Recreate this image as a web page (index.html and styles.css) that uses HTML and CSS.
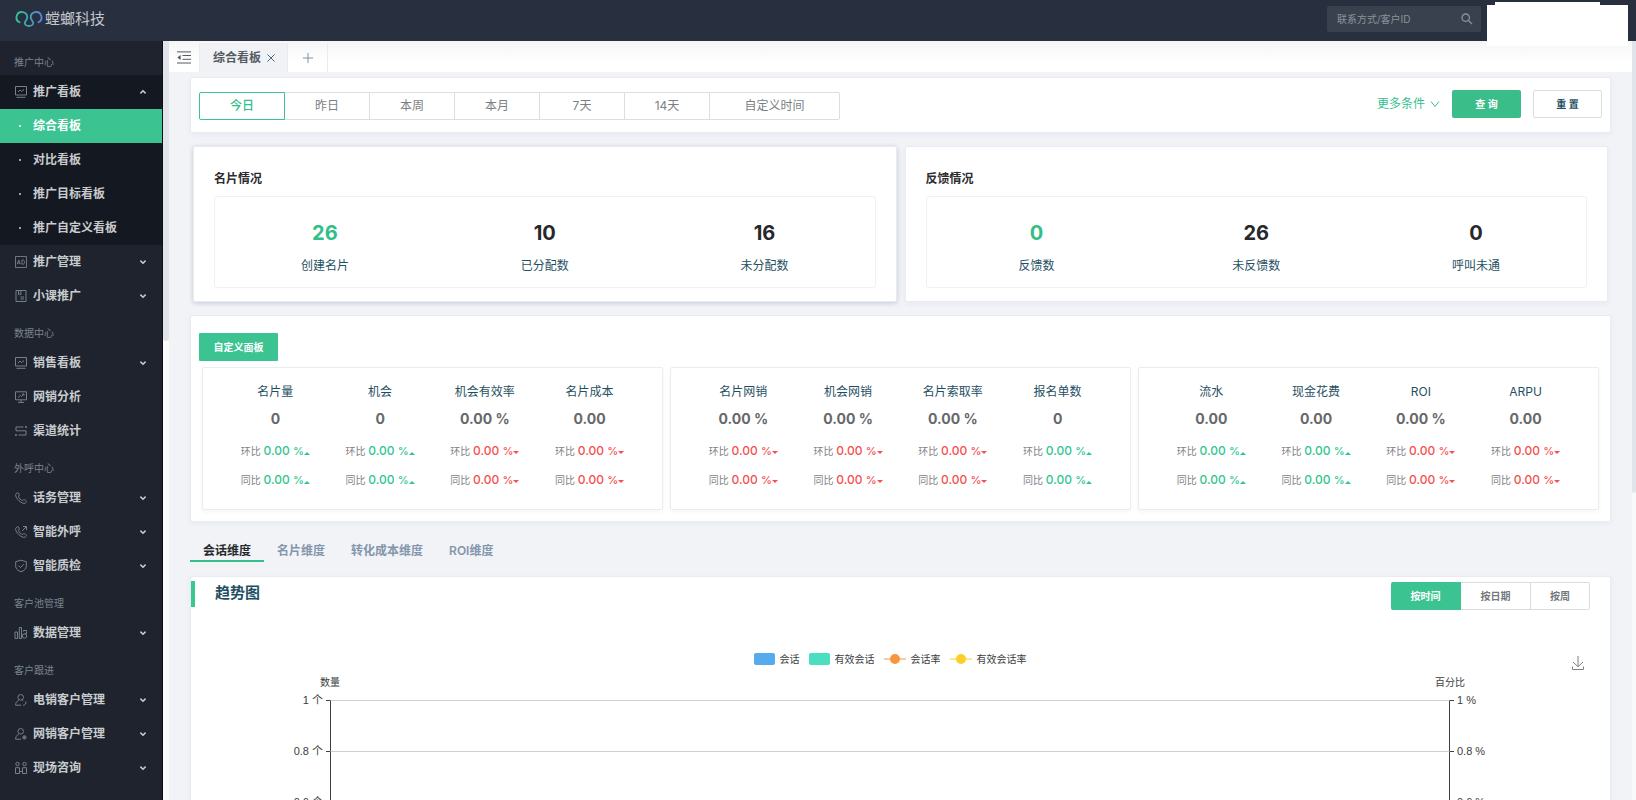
FILE: index.html
```html
<!DOCTYPE html>
<html lang="zh-CN">
<head>
<meta charset="utf-8">
<title>综合看板</title>
<link rel="stylesheet" href="styles.css">
</head>
<body>
<svg class="defs" aria-hidden="true">
  <defs>
    <symbol id="down" viewBox="0 0 8 8"><path d="M1.4 2.6 4 5.2 6.6 2.6" stroke-width="1.5"/></symbol>
    <symbol id="up" viewBox="0 0 8 8"><path d="M1.4 5.4 4 2.8 6.6 5.4" stroke-width="1.5"/></symbol>
    <symbol id="board" viewBox="0 0 14 14"><path d="M1.5 1.5h11v8.5h-11zM2.5 12.3h9M4 7l2-2 1.6 1.5L10 4.5"/></symbol>
    <symbol id="ad" viewBox="0 0 14 14"><path d="M1.5 1.5h11v11h-11zM3.2 9.2 4.8 5l1.6 4.2M3.7 8h2.2M8 5v4.2h.8c2.4 0 2.4-4.2 0-4.2z" stroke-width=".9"/></symbol>
    <symbol id="book" viewBox="0 0 14 14"><path d="M2 1.5h10v11H2zM4.5 1.5v4.2l1.2-.8 1.2.8V1.5M6.5 8h3.5M6.5 10h3.5"/></symbol>
    <symbol id="monitor" viewBox="0 0 14 14"><path d="M1.5 1.8h11v8h-11zM7 9.8v2.5M4 12.4h6M4.2 7.5 6.4 5.4l1 1L10 4M8.3 4H10v1.6"/></symbol>
    <symbol id="route" viewBox="0 0 14 14"><path d="M9.5 3H2v3.8h10V11H4.5M1.4 11h1.2M11.2 3h1.4"/><circle cx="12" cy="3" r=".6"/><circle cx="2" cy="11" r=".6"/></symbol>
    <symbol id="phone" viewBox="0 0 14 14"><path d="M1.800 3.200C3.200 1.200 4.200 1.100 5 3c.8 1.800-.9 1.800-.4 3 .6 1.300 1.700 2.500 3 3.200 1.200.7 1.600-1 3-.4 2.300 1 2.500 1.800.6 3.300C8.300 14 .3 6.500 1.800 3.200z"/></symbol>
    <symbol id="phoneout" viewBox="0 0 14 14"><path d="M1.800 3.200C3.200 1.200 4.200 1.100 5 3c.8 1.800-.9 1.800-.4 3 .6 1.300 1.700 2.500 3 3.200 1.200.7 1.600-1 3-.4 2.300 1 2.500 1.800.6 3.300C8.300 14 .3 6.500 1.800 3.200zM8 6l4.500-4.500M9 1.500h3.500V5"/></symbol>
    <symbol id="shield" viewBox="0 0 14 14"><path d="M7 1.200 12.300 2.700v4.500c0 2.700-2.300 4.500-5.300 5.600-3-1.100-5.300-2.900-5.300-5.600V2.700zM4.500 6.600l2 2 3.200-3.400"/></symbol>
    <symbol id="bars" viewBox="0 0 14 14"><path d="M1 6h2.500v6.500H1zM5.300 1.500h2.200v11H5.300zM9.500 5.500v-1h3v1"/><circle cx="10.500" cy="10" r="2.200"/><path d="M10.500 7.800h2V5.500"/></symbol>
    <symbol id="user1" viewBox="0 0 14 14"><circle cx="6.700" cy="4.300" r="2.800"/><path d="M4.700 7.300C2.500 8.500 1.600 10 1.600 12.200H7M9 12.300c2.300-.2 3-1.600 3-3.800M8.300 7.200l1 .6"/></symbol>
    <symbol id="user2" viewBox="0 0 14 14"><circle cx="6.700" cy="4.300" r="2.800"/><path d="M4.700 7.300C2.500 8.500 1.600 10 1.600 12.200H7"/><circle cx="10.400" cy="10.400" r="1.700"/><path d="M10.400 9.200v2.400M9.200 10.400h2.400"/></symbol>
    <symbol id="meet" viewBox="0 0 14 14"><circle cx="3.500" cy="3" r="1.700"/><circle cx="10.500" cy="3" r="1.700"/><path d="M1.500 6.700h4v5.800h-4zM8.500 6.700h4v5.800h-4zM5.500 10.500h3"/></symbol>
  </defs>
</svg>

<header class="top">
  <a class="logo" href="#">
    <svg class="logo-mark" viewBox="0 0 28 18" aria-hidden="true">
      <defs><linearGradient id="lg" x1="0" x2="1"><stop offset="0" stop-color="#35c490"/><stop offset=".55" stop-color="#3fa3ba"/><stop offset="1" stop-color="#5f7fdc"/></linearGradient></defs>
      <path d="M4.500 12.300A5.400 5.400 0 1 1 12.300 7.500C12.200 9.800 9.800 11 9.800 13c0 1.700 1.900 3 4.200 3s4.200-1.300 4.200-3c0-2-2.400-3.200-2.500-5.500a5.400 5.400 0 1 1 7.800 4.800" fill="none" stroke="url(#lg)" stroke-width="1.800" stroke-linecap="round"/>
    </svg>
    <span>螳螂科技</span>
  </a>
  <label class="search">
    <input type="text" placeholder="联系方式/客户ID" aria-label="联系方式/客户ID">
    <svg viewBox="0 0 12 12" aria-hidden="true"><circle cx="4.700" cy="4.700" r="3.700"/><path d="M7.500 7.500 11 11"/></svg>
  </label>
  <div class="account"></div>
</header>

<div class="shell">
  <nav class="side">
    <h2>推广中心</h2>
    <a class="item open" href="#"><svg class="ico"><use href="#board"/></svg><span>推广看板</span><svg class="arr"><use href="#up"/></svg></a>
    <a class="item open active" href="#"><i class="dot"></i><span>综合看板</span></a>
    <a class="item open" href="#"><i class="dot"></i><span>对比看板</span></a>
    <a class="item open" href="#"><i class="dot"></i><span>推广目标看板</span></a>
    <a class="item open" href="#"><i class="dot"></i><span>推广自定义看板</span></a>
    <a class="item" href="#"><svg class="ico"><use href="#ad"/></svg><span>推广管理</span><svg class="arr"><use href="#down"/></svg></a>
    <a class="item" href="#"><svg class="ico"><use href="#book"/></svg><span>小课推广</span><svg class="arr"><use href="#down"/></svg></a>
    <h2>数据中心</h2>
    <a class="item" href="#"><svg class="ico"><use href="#board"/></svg><span>销售看板</span><svg class="arr"><use href="#down"/></svg></a>
    <a class="item" href="#"><svg class="ico"><use href="#monitor"/></svg><span>网销分析</span></a>
    <a class="item" href="#"><svg class="ico"><use href="#route"/></svg><span>渠道统计</span></a>
    <h2>外呼中心</h2>
    <a class="item" href="#"><svg class="ico"><use href="#phone"/></svg><span>话务管理</span><svg class="arr"><use href="#down"/></svg></a>
    <a class="item" href="#"><svg class="ico"><use href="#phoneout"/></svg><span>智能外呼</span><svg class="arr"><use href="#down"/></svg></a>
    <a class="item" href="#"><svg class="ico"><use href="#shield"/></svg><span>智能质检</span><svg class="arr"><use href="#down"/></svg></a>
    <h2>客户池管理</h2>
    <a class="item" href="#"><svg class="ico"><use href="#bars"/></svg><span>数据管理</span><svg class="arr"><use href="#down"/></svg></a>
    <h2>客户跟进</h2>
    <a class="item" href="#"><svg class="ico"><use href="#user1"/></svg><span>电销客户管理</span><svg class="arr"><use href="#down"/></svg></a>
    <a class="item" href="#"><svg class="ico"><use href="#user2"/></svg><span>网销客户管理</span><svg class="arr"><use href="#down"/></svg></a>
    <a class="item" href="#"><svg class="ico"><use href="#meet"/></svg><span>现场咨询</span><svg class="arr"><use href="#down"/></svg></a>
  </nav>
  <div class="track side-track"><div class="thumb"></div></div>

  <main class="main">
    <div class="tabbar">
      <button class="fold" aria-label="收起菜单"><svg viewBox="0 0 14 13"><path d="M0 .9h14M5.500 4.500H14M5.500 8.300H14M0 12h14"/><path d="M3.600 3.900v5L.3 6.400z" class="solid"/></svg></button>
      <div class="tab">综合看板<button aria-label="关闭"><svg viewBox="0 0 8 8"><path d="M.4.4l7.200 7.200M7.600.4.4 7.600"/></svg></button></div>
      <button class="plus" aria-label="新建"><svg viewBox="0 0 10 10"><path d="M5 0v10M0 5h10"/></svg></button>
    </div>

    <div class="content">
      <section class="card filter">
        <div class="range">
          <button class="on">今日</button><button>昨日</button><button>本周</button><button>本月</button><button>7天</button><button>14天</button><button class="wide">自定义时间</button>
        </div>
        <div class="actions">
          <a class="more" href="#">更多条件<svg viewBox="0 0 10 8"><path d="M1 1.500 5 6.500 9 1.500"/></svg></a>
          <button class="primary">查 询</button>
          <button class="plain">重 置</button>
        </div>
      </section>

      <div class="pair">
        <section class="card sum raised">
          <h3>名片情况</h3>
          <div class="stats">
            <div><b class="green">26</b><span>创建名片</span></div>
            <div><b>10</b><span>已分配数</span></div>
            <div><b>16</b><span>未分配数</span></div>
          </div>
        </section>
        <section class="card sum">
          <h3>反馈情况</h3>
          <div class="stats">
            <div><b class="green">0</b><span>反馈数</span></div>
            <div><b>26</b><span>未反馈数</span></div>
            <div><b>0</b><span>呼叫未通</span></div>
          </div>
        </section>
      </div>

      <section class="card board">
        <button class="custom">自定义面板</button>
        <div class="panels">
          <div class="panel">
            <div class="metric up"><h4>名片量</h4><b>0</b><p>环比 <em>0.00 <small>%</small></em></p><p>同比 <em>0.00 <small>%</small></em></p></div>
            <div class="metric up"><h4>机会</h4><b>0</b><p>环比 <em>0.00 <small>%</small></em></p><p>同比 <em>0.00 <small>%</small></em></p></div>
            <div class="metric dn"><h4>机会有效率</h4><b>0.00 %</b><p>环比 <em>0.00 <small>%</small></em></p><p>同比 <em>0.00 <small>%</small></em></p></div>
            <div class="metric dn"><h4>名片成本</h4><b>0.00</b><p>环比 <em>0.00 <small>%</small></em></p><p>同比 <em>0.00 <small>%</small></em></p></div>
          </div>
          <div class="panel">
            <div class="metric dn"><h4>名片网销</h4><b>0.00 %</b><p>环比 <em>0.00 <small>%</small></em></p><p>同比 <em>0.00 <small>%</small></em></p></div>
            <div class="metric dn"><h4>机会网销</h4><b>0.00 %</b><p>环比 <em>0.00 <small>%</small></em></p><p>同比 <em>0.00 <small>%</small></em></p></div>
            <div class="metric dn"><h4>名片索取率</h4><b>0.00 %</b><p>环比 <em>0.00 <small>%</small></em></p><p>同比 <em>0.00 <small>%</small></em></p></div>
            <div class="metric up"><h4>报名单数</h4><b>0</b><p>环比 <em>0.00 <small>%</small></em></p><p>同比 <em>0.00 <small>%</small></em></p></div>
          </div>
          <div class="panel">
            <div class="metric up"><h4>流水</h4><b>0.00</b><p>环比 <em>0.00 <small>%</small></em></p><p>同比 <em>0.00 <small>%</small></em></p></div>
            <div class="metric up"><h4>现金花费</h4><b>0.00</b><p>环比 <em>0.00 <small>%</small></em></p><p>同比 <em>0.00 <small>%</small></em></p></div>
            <div class="metric dn"><h4>ROI</h4><b>0.00 %</b><p>环比 <em>0.00 <small>%</small></em></p><p>同比 <em>0.00 <small>%</small></em></p></div>
            <div class="metric dn"><h4>ARPU</h4><b>0.00</b><p>环比 <em>0.00 <small>%</small></em></p><p>同比 <em>0.00 <small>%</small></em></p></div>
          </div>
        </div>
      </section>

      <div class="dims">
        <button class="on">会话维度</button><button>名片维度</button><button>转化成本维度</button><button>ROI维度</button>
      </div>

      <section class="card trend">
        <div class="trend-head">
          <h3>趋势图</h3>
          <div class="seg"><button class="on">按时间</button><button>按日期</button><button class="short">按周</button></div>
        </div>
        <div class="legend-row">
          <ul class="legend">
            <li><i class="swatch blue"></i>会话</li>
            <li><i class="swatch teal"></i>有效会话</li>
            <li><svg class="line orange" viewBox="0 0 22 10"><path d="M0 5h22"/><circle cx="11" cy="5" r="5"/></svg>会话率</li>
            <li><svg class="line yellow" viewBox="0 0 22 10"><path d="M0 5h22"/><circle cx="11" cy="5" r="5"/></svg>有效会话率</li>
          </ul>
          <button class="save" aria-label="下载"><svg viewBox="0 0 12 14"><path d="M6 0v10.500M1 6l5 4.700L11 6M.5 10.500v3h11v-3"/></svg></button>
        </div>
        <div class="units"><span>数量</span><span>百分比</span></div>
        <div class="chart">
          <div class="row"><span class="l">1 个</span><i></i><div></div><i></i><span>1 %</span></div>
          <div class="row"><span class="l">0.8 个</span><i></i><div></div><i></i><span>0.8 %</span></div>
          <div class="row"><span class="l">0.6 个</span><i></i><div></div><i></i><span>0.6 %</span></div>
        </div>
      </section>
    </div>
  </main>
  <div class="track main-track"><div class="thumb"></div></div>
</div>
</body>
</html>
```

FILE: styles.css
```css
* { box-sizing: border-box; }

body {
  margin: 0;
  height: 100vh;
  display: flex;
  flex-direction: column;
  overflow: hidden;
  background: #f1f3f7;
  color: #1f5062;
  font: 12px/16px Inter, "Noto Sans CJK SC", sans-serif;
}

button {
  margin: 0;
  padding: 0;
  border: 0;
  background: none;
  color: inherit;
  font: inherit;
  cursor: pointer;
}

a { color: inherit; text-decoration: none; }
h2, h3, h4, p, ul { margin: 0; padding: 0; }
svg { fill: none; stroke: currentColor; flex: none; }
.defs { position: absolute; width: 0; height: 0; }

/* Header */
.top {
  flex: none;
  display: flex;
  align-items: flex-start;
  height: 41px;
  padding: 0 8px 0 15px;
  background: #28303f;
}
.logo {
  display: flex;
  align-items: center;
  gap: 2px;
  height: 38px;
  color: #c4c8ce;
  font-size: 15px;
  font-weight: 400;
}
.logo-mark { width: 28px; height: 18px; }
.search {
  display: flex;
  align-items: center;
  width: 154px;
  height: 26px;
  margin: 6px 6px 0 auto;
  padding: 0 8px 0 10px;
  border-radius: 2px;
  background: #3a414e;
  color: #8b929b;
}
.search input {
  flex: 1;
  min-width: 0;
  padding: 0;
  border: 0;
  outline: 0;
  background: none;
  color: inherit;
  font: 10px/16px Inter, "Noto Sans CJK SC", sans-serif;
}
.search input::placeholder { color: #8b929b; opacity: 1; }
.search svg { width: 12px; height: 12px; stroke-width: 1.3; }
.account {
  position: relative;
  z-index: 2;
  width: 141px;
  height: 41px;
  margin-top: 5px;
  background: #fff;
}
.account::before {
  content: "";
  position: absolute;
  top: -3px;
  left: 8px;
  width: 105px;
  height: 3px;
  background: #fff;
}

/* Sidebar */
.shell { flex: 1; min-height: 0; display: flex; }
.side {
  flex: none;
  width: 163px;
  padding-top: 1px;
  overflow: hidden;
  background: #1e232d;
  border-right: 1px solid #0c0f15;
  color: #c9cccf;
}
.side h2 {
  height: 33px;
  padding: 12px 14px 0;
  color: #7c848d;
  font-size: 10px;
  line-height: 16px;
  font-weight: 400;
}
.item {
  display: flex;
  align-items: center;
  height: 34px;
  padding: 0 15px 0 14px;
  font-weight: 600;
}
.item.open { background: #141820; }
.item.active { background: #3bc492; color: #fff; }
.ico { width: 14px; height: 14px; margin-right: 5px; color: #76808a; }
.arr { width: 8px; height: 8px; margin-left: auto; }
.dot {
  width: 2px;
  height: 2px;
  margin: 0 12px 0 5px;
  border-radius: 1px;
  background: currentColor;
}
.track { flex: none; background: #f8f9fb; }
.thumb { background: #e1e5eb; border-radius: 0 0 3px 3px; }
.side-track { width: 6px; background: #fcfcfd; }
.side-track .thumb { height: 300px; }
.main-track { width: 4px; }
.main-track .thumb { height: 452px; }

/* Page tabs */
.main { flex: 1; min-width: 0; overflow: hidden; }
.tabbar {
  display: flex;
  height: 31px;
  padding-top: 2px;
  background: linear-gradient(#f6f6f7, #fff 70%);
  color: #555b63;
}
.tabbar > * {
  display: flex;
  align-items: center;
  justify-content: center;
  border-right: 1px solid #e9ebef;
}
.fold { width: 31px; }
.fold svg { width: 14px; height: 13px; }
.solid { fill: currentColor; stroke: none; }
.tab { gap: 6px; padding: 0 12px 0 13px; background: #f0f2f5; font-weight: 600; }
.tab button { display: flex; color: #47697d; }
.tab svg { width: 8px; height: 8px; }
.plus { width: 40px; color: #7c94a5; }
.plus svg { width: 10px; height: 10px; }

/* Cards */
.content { padding: 5px 21px 0; }
.card {
  background: #fff;
  border: 1px solid #e8ebef;
  border-radius: 2px;
  box-shadow: 0 2px 6px rgba(40, 60, 90, .05);
}
.filter {
  display: flex;
  justify-content: space-between;
  height: 56px;
  padding: 12px 8px 0;
}
.range { display: flex; height: 28px; margin-top: 2px; color: #7b7f84; }
.range button {
  width: 86px;
  margin-right: -1px;
  border: 1px solid #dcdee1;
}
.range button.on { position: relative; border-color: #3bc492; border-radius: 2px 0 0 2px; color: #2fbf8a; font-weight: 500; }
.range button.wide { width: 131px; margin: 0; border-radius: 0 2px 2px 0; }
.actions { display: flex; align-items: flex-start; }
.more { display: flex; align-items: center; gap: 5px; height: 28px; margin-right: 12px; color: #36bf8c; }
.more svg { width: 10px; height: 8px; }
.actions button { width: 69px; height: 28px; border-radius: 2px; font-size: 10px; font-weight: 600; }
.primary { margin-right: 12px; background: #3abd88; color: #fff; }
.actions .plain { border: 1px solid #dadde1; }

.pair { display: grid; grid-template-columns: 1fr 1fr; gap: 8px; padding: 13px 3px; }
.sum { padding: 24px 20px 13px; }
.raised { box-shadow: 0 1px 5px rgba(30, 50, 80, .22); }
.sum h3 { color: #2a2c2f; font-size: 12px; line-height: 16px; font-weight: 600; }
.stats {
  display: grid;
  grid-template-columns: repeat(3, 1fr);
  margin-top: 9px;
  padding: 24px 0 13px;
  border: 1px solid #f0f1f3;
  border-radius: 3px;
  text-align: center;
}
.stats b, .stats span { display: block; }
.stats b { margin-bottom: 13px; color: #26282b; font-size: 20px; line-height: 24px; }
.stats b.green { color: #32be88; }

.board { padding: 17px 11px 11px; }
.custom {
  display: block;
  width: 79px;
  height: 28px;
  margin: 0 0 6px -3px;
  border-radius: 1px;
  background: #3bc492;
  color: #fff;
  font-size: 10px;
  font-weight: 600;
}
.panels { display: grid; grid-template-columns: repeat(3, 1fr); gap: 7px; }
.panel {
  display: grid;
  grid-template-columns: repeat(4, 1fr);
  padding: 16px 20px 21px;
  border: 1px solid #eaecef;
  border-radius: 2px;
  box-shadow: 0 2px 4px rgba(40, 60, 90, .04);
}
.metric { text-align: center; }
.metric h4 { font-size: 12px; font-weight: 400; margin-bottom: 10px; }
.metric b { display: block; margin-bottom: 15px; color: #66686b; font-size: 14px; line-height: 18px; font-weight: 700; }
.metric p { color: #7f8286; font-size: 10px; line-height: 16px; }
.metric p + p { margin-top: 13px; }
.metric em { font-size: 12px; font-style: normal; font-weight: 500; }
.metric small { font-size: 11px; }
.metric em::after {
  content: "";
  display: inline-block;
  border: 3px solid transparent;
}
.up em { color: #31c690; }
.up em::after { border-top: 0; border-bottom-color: currentColor; }
.dn em { color: #f5504f; }
.dn em::after { border-bottom: 0; border-top-color: currentColor; vertical-align: 1px; }

/* Dimension tabs and trend chart */
.dims { display: flex; margin: 17px 0 14px; color: #8496ab; font-weight: 600; }
.dims button { padding: 4px 13px 1px; border-bottom: 2px solid transparent; }
.dims button.on { color: #27292c; border-color: #34c08b; }

.trend-head { display: flex; justify-content: space-between; padding: 4px 20px 0 0; }
.trend-head h3 {
  height: 26px;
  padding-left: 20px;
  border-left: 4px solid #3bc88f;
  font-size: 15px;
  line-height: 24px;
  font-weight: 600;
}
.seg { display: flex; height: 28px; margin-top: 1px; color: #75787c; font-size: 10px; font-weight: 600; }
.seg button { width: 70px; border: 1px solid #dadde0; border-left: 0; }
.seg button.short { width: 59px; border-radius: 0 2px 2px 0; }
.seg button.on { border-color: #3bc492; border-radius: 2px 0 0 2px; background: #3bc492; color: #fff; }

.legend-row {
  display: grid;
  grid-template-columns: 1fr auto 1fr;
  align-items: center;
  padding: 38px 26px 0 5px;
}
.legend {
  grid-column: 2;
  display: flex;
  gap: 9px;
  list-style: none;
  color: #3c3e41;
  font-size: 10px;
}
.legend li { display: flex; align-items: center; gap: 5px; }
.swatch { width: 21px; height: 12px; border-radius: 2px; }
.blue { background: #55abee; }
.teal { background: #4bdfc1; }
.line { width: 22px; height: 10px; }
.line path { stroke-width: 2; opacity: .5; }
.line circle { fill: currentColor; stroke: none; }
.orange { color: #f9953f; }
.yellow { color: #fbcf27; }
.save { justify-self: end; display: flex; padding-top: 8px; color: #808285; }
.save svg { width: 12px; height: 14px; }

.units {
  display: flex;
  justify-content: space-between;
  margin-top: 4px;
  padding: 0 145px 0 129px;
  color: #3c3e41;
  font-size: 10px;
}
.chart { margin-top: 10px; color: #3c3e41; font: 11px/14px "Liberation Sans", "Noto Sans CJK SC", sans-serif; }
.row { display: grid; grid-template-columns: 135px 4px 1fr 4px 156px; height: 51px; }
.row span { margin-top: -7px; padding-left: 3px; }
.row .l { padding: 0 3px 0 0; text-align: right; }
.row i { border-top: 1px solid #3c3e41; }
.row div {
  border-top: 1px solid #cfd0d2;
  border-left: 1px solid #3c3e41;
  border-right: 1px solid #3c3e41;
}
```
